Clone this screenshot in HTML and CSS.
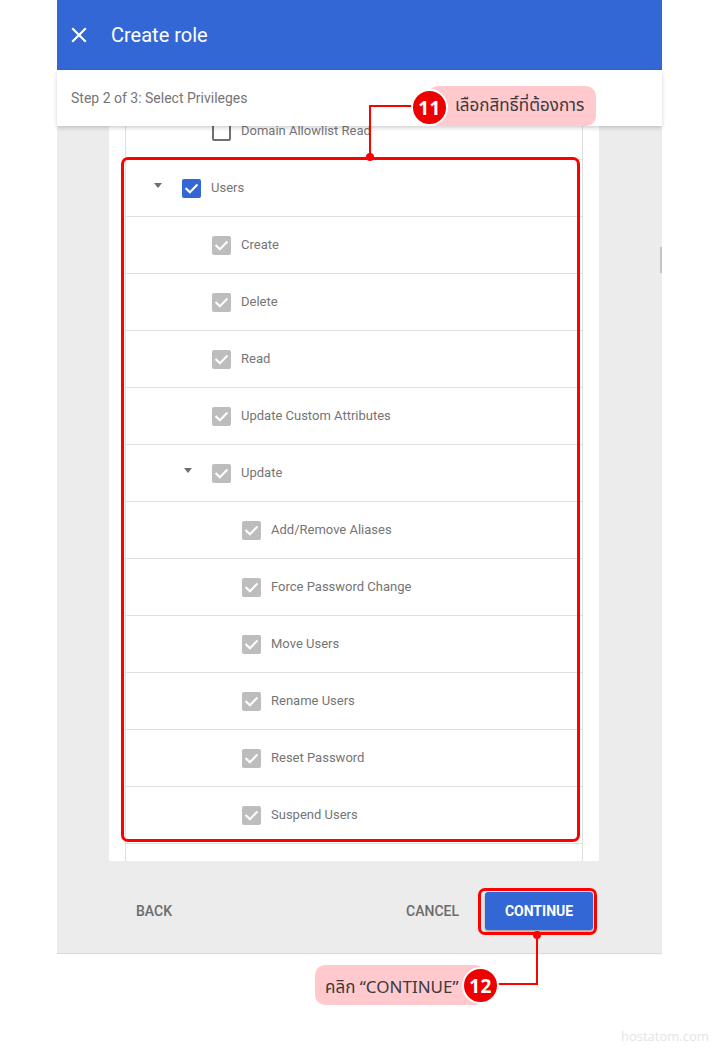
FILE: index.html
```html
<!DOCTYPE html>
<html lang="en">
<head>
<meta charset="utf-8">
<title>Create role</title>
<link rel="stylesheet" href="styles.css">
</head>
<body>
<div class="dialog">
  <header class="appbar">
    <svg class="close-icon" width="16" height="16" viewBox="0 0 16 16" aria-hidden="true">
      <path d="M2 2 L14 14 M14 2 L2 14" stroke="#fff" stroke-width="2.2" stroke-linecap="square" fill="none"/>
    </svg>
    <h1 class="title">Create role</h1>
  </header>
  <div class="stepbar">Step 2 of 3: Select Privileges</div>
  <main class="content">
    <div class="panel">
      <div class="list">
        <div class="row lvl2"><span class="toggle"></span><span class="cb cb-empty"></span><span class="label">Domain Allowlist Read</span></div>
        <div class="row lvl1"><span class="toggle"><i class="tri"></i></span><span class="cb cb-blue"><svg viewBox="0 0 20 20"><path d="M4.5 10.2 L8.3 14 L15.5 6.6"/></svg></span><span class="label">Users</span></div>
        <div class="row lvl2"><span class="toggle"></span><span class="cb cb-grey"><svg viewBox="0 0 20 20"><path d="M4.5 10.2 L8.3 14 L15.5 6.6"/></svg></span><span class="label">Create</span></div>
        <div class="row lvl2"><span class="toggle"></span><span class="cb cb-grey"><svg viewBox="0 0 20 20"><path d="M4.5 10.2 L8.3 14 L15.5 6.6"/></svg></span><span class="label">Delete</span></div>
        <div class="row lvl2"><span class="toggle"></span><span class="cb cb-grey"><svg viewBox="0 0 20 20"><path d="M4.5 10.2 L8.3 14 L15.5 6.6"/></svg></span><span class="label">Read</span></div>
        <div class="row lvl2"><span class="toggle"></span><span class="cb cb-grey"><svg viewBox="0 0 20 20"><path d="M4.5 10.2 L8.3 14 L15.5 6.6"/></svg></span><span class="label">Update Custom Attributes</span></div>
        <div class="row lvl2"><span class="toggle"><i class="tri"></i></span><span class="cb cb-grey"><svg viewBox="0 0 20 20"><path d="M4.5 10.2 L8.3 14 L15.5 6.6"/></svg></span><span class="label">Update</span></div>
        <div class="row lvl3"><span class="toggle"></span><span class="cb cb-grey"><svg viewBox="0 0 20 20"><path d="M4.5 10.2 L8.3 14 L15.5 6.6"/></svg></span><span class="label">Add/Remove Aliases</span></div>
        <div class="row lvl3"><span class="toggle"></span><span class="cb cb-grey"><svg viewBox="0 0 20 20"><path d="M4.5 10.2 L8.3 14 L15.5 6.6"/></svg></span><span class="label">Force Password Change</span></div>
        <div class="row lvl3"><span class="toggle"></span><span class="cb cb-grey"><svg viewBox="0 0 20 20"><path d="M4.5 10.2 L8.3 14 L15.5 6.6"/></svg></span><span class="label">Move Users</span></div>
        <div class="row lvl3"><span class="toggle"></span><span class="cb cb-grey"><svg viewBox="0 0 20 20"><path d="M4.5 10.2 L8.3 14 L15.5 6.6"/></svg></span><span class="label">Rename Users</span></div>
        <div class="row lvl3"><span class="toggle"></span><span class="cb cb-grey"><svg viewBox="0 0 20 20"><path d="M4.5 10.2 L8.3 14 L15.5 6.6"/></svg></span><span class="label">Reset Password</span></div>
        <div class="row lvl3"><span class="toggle"></span><span class="cb cb-grey"><svg viewBox="0 0 20 20"><path d="M4.5 10.2 L8.3 14 L15.5 6.6"/></svg></span><span class="label">Suspend Users</span></div>
        <div class="row lvl1"></div>
      </div>
    </div>
  </main>
  <footer class="actions">
    <button class="btn btn-text">BACK</button>
    <span class="spacer"></span>
    <button class="btn btn-text">CANCEL</button>
    <button class="btn btn-primary">CONTINUE</button>
  </footer>
  <div class="scroll-thumb"></div>
</div>

<div class="annot">
  <div class="hl hl-list"></div>
  <div class="ln ln-v1"></div>
  <div class="ln ln-h1"></div>
  <div class="dot dot1"></div>
  <div class="pill pill1">เลือกสิทธิ์ที่ต้องการ</div>
  <div class="badge badge1">11</div>

  <div class="hl hl-btn"></div>
  <div class="ln ln-v2"></div>
  <div class="ln ln-h2"></div>
  <div class="dot dot2"></div>
  <div class="pill pill2">คลิก “CONTINUE”</div>
  <div class="badge badge2">12</div>
</div>

<div class="watermark">hostatom.com</div>
</body>
</html>
```

FILE: styles.css
```css
* { box-sizing: border-box; }
html, body { margin: 0; padding: 0; }
body {
  background: #ffffff;
  font-family: Roboto, "Noto Sans", Arial, sans-serif;
  width: 720px;
  height: 1051px;
  position: relative;
  overflow: hidden;
}

.dialog {
  position: relative;
  margin-left: 57px;
  width: 605px;
  display: flex;
  flex-direction: column;
  border-bottom: 1px solid #dadada;
}

.appbar {
  height: 70px;
  background: #3367d6;
  display: flex;
  align-items: center;
  padding-left: 14px;
}
.close-icon { display: block; margin-top: 0; }
.title {
  margin: 0 0 0 24px;
  font-size: 20px;
  font-weight: 400;
  color: #ffffff;
  letter-spacing: 0;
}

.stepbar {
  height: 56px;
  background: #ffffff;
  display: flex;
  align-items: center;
  padding-left: 14px;
  font-size: 14px;
  color: #757575;
  position: relative;
  z-index: 2;
  box-shadow: 0 2px 4px rgba(0,0,0,0.18);
}

.content {
  background: #ececec;
  height: 735px;
  padding: 0 63px 0 52px;
}
.panel {
  background: #ffffff;
  height: 735px;
  overflow: hidden;
  padding: 0 16px;
}
.list {
  margin-top: -23px;
  border-left: 1px solid #e0e0e0;
  border-right: 1px solid #e0e0e0;
}
.row {
  height: 57px;
  border-bottom: 1px solid #e0e0e0;
  display: flex;
  align-items: center;
}
.row.lvl1 { padding-left: 28px; }
.row.lvl2 { padding-left: 58px; }
.row.lvl3 { padding-left: 88px; }

.toggle {
  width: 28px;
  height: 20px;
  flex: none;
  display: flex;
  align-items: flex-start;
  padding-top: 5px;
}
.tri {
  display: block;
  width: 0; height: 0;
  border-left: 4.5px solid transparent;
  border-right: 4.5px solid transparent;
  border-top: 5px solid #736d6d;
}

.cb {
  width: 19px;
  height: 19px;
  flex: none;
  border-radius: 2px;
  margin-right: 10px;
  display: flex;
  align-items: center;
  justify-content: center;
}
.cb svg { width: 19px; height: 19px; display: block; }
.cb svg path { fill: none; stroke: #ffffff; stroke-width: 2.2; stroke-linecap: square; }
.cb-blue { background: #3367d6; }
.cb-grey { background: #bdbdbd; }
.cb-empty { border: 2px solid #707070; }

.label {
  font-size: 13px;
  line-height: 15px;
  padding-bottom: 2px;
  color: #757575;
  white-space: nowrap;
}

.actions {
  height: 92px;
  background: #ececec;
  display: flex;
  align-items: center;
  padding: 8px 69px 0 63px;
}
.spacer { flex: 1; }
.btn {
  font-family: Roboto, Arial, sans-serif;
  font-size: 14px;
  font-weight: 500;
  border: none;
  background: transparent;
  cursor: pointer;
  height: 38px;
  padding: 0 16px;
}
.btn-text { color: #6b6b6b; }
.btn-primary {
  margin-left: 10px;
  width: 108px;
  padding: 0;
  background: #3367d6;
  color: #ffffff;
  font-weight: 700;
  border-radius: 3px;
  box-shadow: 0 2px 3px rgba(0,0,0,0.3);
}

.scroll-thumb {
  position: absolute;
  right: 0;
  top: 247px;
  width: 2px;
  height: 26px;
  background: #c4c4c4;
}

/* annotations */
.annot {
  position: absolute;
  left: 0; top: 0;
  width: 720px; height: 1051px;
  pointer-events: none;
  z-index: 10;
}
.hl {
  position: absolute;
  border: 3px solid #ff0000;
  border-radius: 7px;
}
.hl-list { left: 121px; top: 157px; width: 459px; height: 685px; }
.hl-btn { left: 478px; top: 888px; width: 119px; height: 47px; }

.ln { position: absolute; background: #ff0000; }
.ln-v1 { left: 369px; top: 105px; width: 2px; height: 52px; }
.ln-h1 { left: 369px; top: 105px; width: 45px; height: 2px; }
.ln-v2 { left: 536px; top: 935px; width: 2px; height: 50px; }
.ln-h2 { left: 498px; top: 983px; width: 40px; height: 2px; }

.dot {
  position: absolute;
  width: 8px; height: 8px;
  border-radius: 50%;
  background: #ff0000;
}
.dot1 { left: 366px; top: 153px; }
.dot2 { left: 533px; top: 931px; }

.pill {
  position: absolute;
  height: 40px;
  background: #ffc9ce;
  border-radius: 10px;
  display: flex;
  align-items: center;
  font-family: Tahoma, "Noto Sans Thai", "Noto Sans", "DejaVu Sans", sans-serif;
  font-size: 17px;
  color: #3a3a3a;
  white-space: nowrap;
}
.pill1 { left: 428px; top: 86px; width: 168px; padding-left: 27px; }
.pill2 { left: 315px; top: 965px; width: 170px; padding-left: 10px; padding-top: 5px; }

.badge {
  position: absolute;
  width: 37px; height: 37px;
  border-radius: 50%;
  background: #ee0000;
  border: 2px solid #ffffff;
  color: #ffffff;
  font-family: "Open Sans", "DejaVu Sans", Arial, sans-serif;
  font-weight: 700;
  font-size: 19px;
  display: flex;
  align-items: center;
  justify-content: center;
  letter-spacing: 0.5px;
}
.badge1 { left: 411px; top: 89px; }
.badge2 { left: 462px; top: 967px; }

.watermark {
  position: absolute;
  left: 621px;
  top: 1027px;
  font-family: "Open Sans", "DejaVu Sans", sans-serif;
  font-size: 13px;
  color: #e4e4e4;
}
```
